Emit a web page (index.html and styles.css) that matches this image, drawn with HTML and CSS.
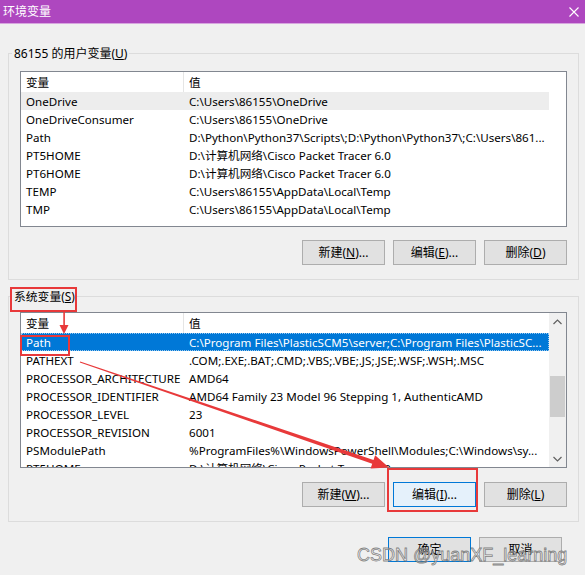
FILE: index.html
```html
<!DOCTYPE html>
<html lang="zh">
<head>
<meta charset="utf-8">
<title>环境变量</title>
<link rel="stylesheet" href="styles.css">
</head>
<body>
<div class="titlebar">
  <span class="title">环境变量</span>
  <svg class="close" width="10" height="10" viewBox="0 0 10 10"><path d="M0.5 0.5L9.5 9.5M9.5 0.5L0.5 9.5" stroke="#fff" stroke-width="1.1"/></svg>
</div>

<section class="group user">
  <div class="group-title">86155 的用户变量(<u>U</u>)</div>
  <div class="list">
    <div class="table">
      <div class="row head"><span class="c1">变量</span><span class="c2">值</span></div>
      <div class="row hot"><span class="c1">OneDrive</span><span class="c2">C:\Users\86155\OneDrive</span></div>
      <div class="row"><span class="c1">OneDriveConsumer</span><span class="c2">C:\Users\86155\OneDrive</span></div>
      <div class="row"><span class="c1">Path</span><span class="c2">D:\Python\Python37\Scripts\;D:\Python\Python37\;C:\Users\861...</span></div>
      <div class="row"><span class="c1">PT5HOME</span><span class="c2">D:\计算机网络\Cisco Packet Tracer 6.0</span></div>
      <div class="row"><span class="c1">PT6HOME</span><span class="c2">D:\计算机网络\Cisco Packet Tracer 6.0</span></div>
      <div class="row"><span class="c1">TEMP</span><span class="c2">C:\Users\86155\AppData\Local\Temp</span></div>
      <div class="row"><span class="c1">TMP</span><span class="c2">C:\Users\86155\AppData\Local\Temp</span></div>
    </div>
  </div>
  <div class="btns">
    <button>新建(<u>N</u>)...</button>
    <button>编辑(<u>E</u>)...</button>
    <button>删除(<u>D</u>)</button>
  </div>
</section>

<section class="group sys">
  <div class="group-title">系统变量(<u>S</u>)</div>
  <div class="list">
    <div class="table">
      <div class="row head"><span class="c1">变量</span><span class="c2">值</span></div>
      <div class="row sel"><span class="c1">Path</span><span class="c2">C:\Program Files\PlasticSCM5\server;C:\Program Files\PlasticSC...</span></div>
      <div class="row"><span class="c1">PATHEXT</span><span class="c2">.COM;.EXE;.BAT;.CMD;.VBS;.VBE;.JS;.JSE;.WSF;.WSH;.MSC</span></div>
      <div class="row"><span class="c1">PROCESSOR_ARCHITECTURE</span><span class="c2">AMD64</span></div>
      <div class="row"><span class="c1">PROCESSOR_IDENTIFIER</span><span class="c2">AMD64 Family 23 Model 96 Stepping 1, AuthenticAMD</span></div>
      <div class="row"><span class="c1">PROCESSOR_LEVEL</span><span class="c2">23</span></div>
      <div class="row"><span class="c1">PROCESSOR_REVISION</span><span class="c2">6001</span></div>
      <div class="row"><span class="c1">PSModulePath</span><span class="c2">%ProgramFiles%\WindowsPowerShell\Modules;C:\Windows\sy...</span></div>
      <div class="row"><span class="c1">PT5HOME</span><span class="c2">D:\计算机网络\Cisco Packet Tracer 6.0</span></div>
    </div>
    <div class="scroll">
      <div class="arrow"><svg width="9" height="6" viewBox="0 0 9 6"><path d="M0.5 5L4.5 1L8.5 5" fill="none" stroke="#606060" stroke-width="1.2"/></svg></div>
      <div class="track"><div class="thumb"></div></div>
      <div class="arrow"><svg width="9" height="6" viewBox="0 0 9 6"><path d="M0.5 1L4.5 5L8.5 1" fill="none" stroke="#606060" stroke-width="1.2"/></svg></div>
    </div>
  </div>
  <div class="btns">
    <button>新建(<u>W</u>)...</button>
    <button class="focus">编辑(<u>I</u>)...</button>
    <button>删除(<u>L</u>)</button>
  </div>
</section>

<div class="footer">
  <button class="primary">确定</button>
  <button>取消</button>
</div>

<svg class="annot" width="585" height="575" viewBox="0 0 585 575">
  <rect x="11" y="288" width="65" height="23" fill="none" stroke="#E8393A" stroke-width="2"/>
  <rect x="21" y="336" width="48" height="19" fill="none" stroke="#E8393A" stroke-width="2"/>
  <rect x="388" y="469" width="89" height="42" fill="none" stroke="#E8393A" stroke-width="2"/>
  <rect x="63.3" y="311" width="1.6" height="16" fill="#E8393A"/>
  <polygon points="59.5,325 68.5,325 64,334" fill="#E8393A"/>
  <polygon points="80.16,361.53 373.51,459.95 375.12,455.21 389,467.5 370.60,468.47 372.21,463.73 79.84,362.47" fill="#E8393A"/>
</svg>

<div class="watermark">CSDN @yuanXF_learning</div>
</body>
</html>
```

FILE: styles.css
```css
* {
  box-sizing: border-box;
}

body {
  margin: 0;
  width: 585px;
  height: 575px;
  background: #F0F0F0;
  font-family: "Noto Sans", "Noto Sans CJK SC", sans-serif;
  font-size: 12px;
  color: #000;
  position: relative;
  overflow: hidden;
}

.titlebar {
  height: 24px;
  background: #AE47BF;
  border-bottom: 1px solid #D7A5DF;
  display: flex;
  align-items: center;
  justify-content: space-between;
  padding: 0 6px 0 3px;
  color: #fff;
}

.title {
  line-height: 16px;
}

.close {
  display: block;
}

.group {
  margin: 29px 6px 0 8px;
  border: 1px solid #DCDCDC;
  padding: 0 11px 14px;
}

.group.sys {
  margin-top: 16px;
}

.group-title {
  width: fit-content;
  height: 16px;
  line-height: 17px;
  margin: -9px 0 0 -8px;
  padding: 0 2px;
  background: #F0F0F0;
}

.sys .group-title {
  font-size: 11.8px;
}

.list {
  margin-top: 10px;
  height: 156px;
  border: 1px solid #828790;
  background: #fff;
  display: flex;
  font-size: 11.6px;
}

.sys .list {
  margin-top: 8px;
}

.table {
  width: 528px;
  flex: none;
  overflow: hidden;
}

.row {
  display: flex;
  height: 18px;
  line-height: 20px;
  white-space: nowrap;
}

.row.head {
  height: 20px;
  line-height: 22px;
}

.c1 {
  width: 163px;
  flex: none;
  padding-left: 5px;
  overflow: hidden;
}

.head .c1 {
  border-right: 1px solid #E5E5E5;
}

.c2 {
  flex: 1;
  padding-left: 5px;
  overflow: hidden;
}

.row.hot {
  background: #EDEDED;
}

.row.sel {
  background: #0078D7;
  color: #fff;
  outline: 1px dotted rgba(255, 255, 255, 0.6);
  outline-offset: -1px;
}

.scroll {
  width: 17px;
  flex: none;
  background: #F0F0F0;
  display: flex;
  flex-direction: column;
}

.arrow {
  height: 17px;
  display: flex;
  align-items: center;
  justify-content: center;
}

.track {
  flex: 1;
  padding-top: 46px;
  display: flex;
  justify-content: center;
}

.thumb {
  width: 15px;
  height: 41px;
  background: #CDCDCD;
}

.btns {
  display: flex;
  justify-content: flex-end;
  gap: 8px;
  margin-top: 13px;
}

.sys .btns {
  margin-top: 14px;
}

button {
  width: 83px;
  height: 25px;
  background: #E1E1E1;
  border: 1px solid #ADADAD;
  font: inherit;
  color: #000;
  padding: 0;
  line-height: 22px;
}

button.focus {
  background: #E5F1FB;
  border-color: #0078D7;
}

button.primary {
  border-color: #0078D7;
}

.footer {
  display: flex;
  justify-content: flex-end;
  gap: 8px;
  margin: 15px 23px 0 0;
}

.annot {
  position: absolute;
  left: 0;
  top: 0;
  pointer-events: none;
}

.watermark {
  position: absolute;
  left: 357px;
  top: 544px;
  font-family: "Liberation Sans", sans-serif;
  font-size: 18px;
  line-height: 22px;
  color: rgba(255, 255, 255, 0.55);
  -webkit-text-stroke: 0.8px rgba(110, 110, 110, 0.85);
  white-space: nowrap;
}
```
